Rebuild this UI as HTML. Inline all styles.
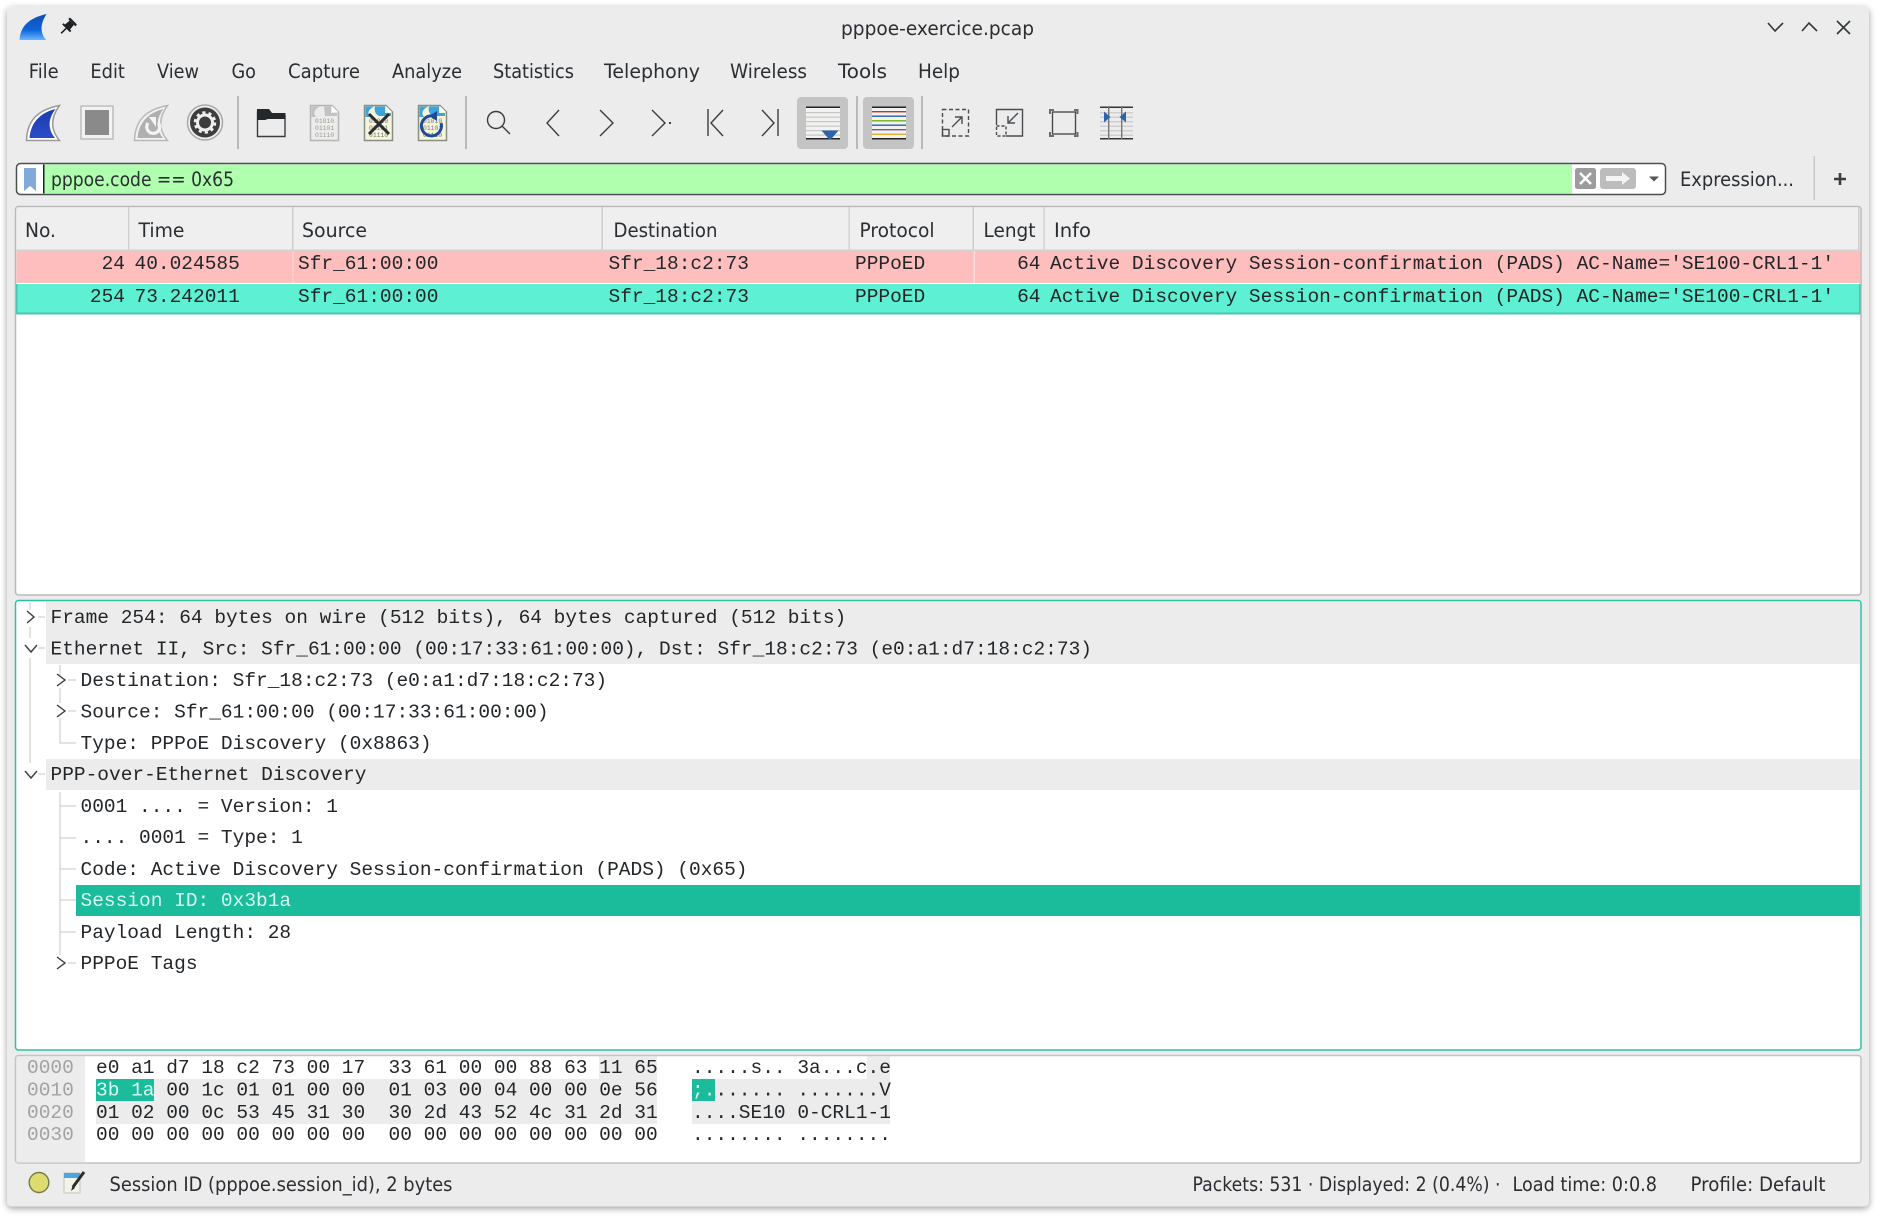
<!DOCTYPE html>
<html><head><meta charset="utf-8"><title>pppoe-exercice.pcap</title>
<style>
html,body{margin:0;padding:0;background:#fff;width:1882px;height:1219px;overflow:hidden}
svg{display:block}
text{white-space:pre}
.u{font-family:"DejaVu Sans","Liberation Sans",sans-serif;font-size:19.3px;fill:#2a2e32}
.m{font-family:"Liberation Mono",monospace;font-size:19.5px;fill:#232629}
.h{font-family:"Liberation Mono",monospace;font-size:19.5px;fill:#232629}
.o{fill:#a0a2a4}
.b{font-family:"Liberation Mono",monospace;font-size:6.4px;fill:#9c9c90}
</style></head><body>
<svg width="1882" height="1219" viewBox="0 0 1882 1219" xmlns="http://www.w3.org/2000/svg">
<defs>
<filter id="s" x="-2%" y="-2%" width="104%" height="104%"><feDropShadow dx="0" dy="2" stdDeviation="3.5" flood-color="#000" flood-opacity=".38"/></filter>
<linearGradient id="fin" x1="0" y1="0" x2="0" y2="1"><stop offset="0" stop-color="#0f4fb8"/><stop offset=".6" stop-color="#0d63d8"/><stop offset="1" stop-color="#66b6ff"/></linearGradient>
<linearGradient id="fin2" x1="0" y1="0" x2="0" y2="1"><stop offset="0" stop-color="#1c3cae"/><stop offset="1" stop-color="#2a4cc8"/></linearGradient>
</defs>
<rect x="7" y="6.500" width="1862" height="1200" rx="5" fill="#ececec" filter="url(#s)"/>

<!-- title bar -->
<path d="M19.500 40C20.500 26 29 18 46.700 14C40.500 23 39.500 32 46 40Z" fill="url(#fin)"/>
<g transform="translate(67.500 27) rotate(45)" fill="#1e2225"><rect x="-5" y="-8.500" width="10" height="2.500" rx=".6"/><path d="M-3-6H3L3.600 0H5.500V2H-5.500V0H-3.600Z"/><rect x="-.8" y="2" width="1.600" height="7"/></g>
<text class="u" x="841" y="35" textLength="193" lengthAdjust="spacingAndGlyphs">pppoe-exercice.pcap</text>
<g fill="none" stroke="#31363b" stroke-width="1.600"><path d="M1768 23L1775 31L1783 23"/><path d="M1802 31L1809 23L1817 31"/><path d="M1837 21L1850 34M1850 21L1837 34"/></g>

<!-- menu -->
<g class="mn">
<text class="u" x="28.700" y="78" textLength="30" lengthAdjust="spacingAndGlyphs">File</text>
<text class="u" x="90.400" y="78" textLength="34.500" lengthAdjust="spacingAndGlyphs">Edit</text>
<text class="u" x="157" y="78" textLength="42" lengthAdjust="spacingAndGlyphs">View</text>
<text class="u" x="231.500" y="78" textLength="24.500" lengthAdjust="spacingAndGlyphs">Go</text>
<text class="u" x="288" y="78" textLength="72" lengthAdjust="spacingAndGlyphs">Capture</text>
<text class="u" x="392" y="78" textLength="70" lengthAdjust="spacingAndGlyphs">Analyze</text>
<text class="u" x="493" y="78" textLength="81" lengthAdjust="spacingAndGlyphs">Statistics</text>
<text class="u" x="604" y="78" textLength="96" lengthAdjust="spacingAndGlyphs">Telephony</text>
<text class="u" x="730" y="78" textLength="77" lengthAdjust="spacingAndGlyphs">Wireless</text>
<text class="u" x="838" y="78" textLength="49" lengthAdjust="spacingAndGlyphs">Tools</text>
<text class="u" x="918" y="78" textLength="42" lengthAdjust="spacingAndGlyphs">Help</text>
</g>

<!-- toolbar -->
<path d="M26.500 140.500C27 122 36 110 59.500 105.500C51 117 50 129 59.500 140.500Z" fill="#fff" stroke="#9a9a9a" stroke-width="1.500"/>
<path d="M29.500 138C30.500 124 39 113 55.500 109C48 119 47.500 129 55 138Z" fill="url(#fin2)"/>
<rect x="81" y="106" width="32" height="33" fill="#f2f2f2" stroke="#bdbdbd" stroke-width="1.500"/>
<rect x="85" y="110" width="24" height="25" fill="#8a8a8a"/>
<path d="M134.500 140.500C135 122 144 110 167.500 105.500C159 117 158 129 167.500 140.500Z" fill="#f2f2f2" stroke="#b8b8b8" stroke-width="1.500"/>
<path d="M137.500 138C138.500 124 147 113 163.500 109C156 119 155.500 129 163 138Z" fill="#b0b0b0"/>
<path d="M148 123A6.500 6.500 0 1 0 158.500 123" fill="none" stroke="#f4f4f4" stroke-width="3.200"/><path d="M149 117H156V127Z" fill="#f4f4f4"/>
<circle cx="205" cy="122.500" r="17.500" fill="#efefef" stroke="#a8a8a8" stroke-width="1.500"/>
<circle cx="205" cy="122.500" r="15" fill="#3d3d3d"/>
<circle cx="205" cy="122.500" r="7.500" fill="none" stroke="#eee" stroke-width="3"/>
<circle cx="205" cy="122.500" r="10" fill="none" stroke="#eee" stroke-width="2.500" stroke-dasharray="3.200 3.100"/>
<rect x="237" y="96" width="2" height="53" fill="#b9b9b9"/>

<path d="M257.500 136.500V112h11l3 4h13.500v20.500Z" fill="#ececec" stroke="#3a3d40" stroke-width="1.400"/>
<path d="M257 120V109h12l3 4h13.500v6H268l-3 1Z" fill="#25282b"/>

<g id="doc"><path d="M310.500 105.500H332L338.500 112V140.500H310.500Z" fill="#ececec" stroke="#b5b5b5" stroke-width="1.500"/><path d="M311.500 106.500H320C314 110 313 113 316 117H311.500Z" fill="#c2c2c2"/><path d="M324 106.500H331V113H337V116H325Z" fill="#c2c2c2"/><path d="M332 106L338 112H332Z" fill="#fff"/>
<text class="b" x="315" y="123">01010</text><text class="b" x="315" y="130">01101</text><text class="b" x="315" y="137">01110</text></g>

<path d="M364.500 105.500H386L392.500 112V140.500H364.500Z" fill="#f5f4dc" stroke="#8a8d80" stroke-width="1.500"/>
<path d="M365.500 106.500H374C368 110 367 113 370 117H365.500Z" fill="#3aa4dd"/><path d="M375 106.500H385V113H391V116H379C375 114 374 110 375 106.500Z" fill="#3aa4dd"/><path d="M386 106L392 112H386Z" fill="#fff"/>
<text class="b" x="369" y="123" style="fill:#777">01010</text><text class="b" x="369" y="130" style="fill:#777">01101</text><text class="b" x="369" y="137" style="fill:#777">01110</text>
<path d="M369 114L389 134M389 114L369 134" stroke="#2b2d30" stroke-width="3"/>

<path d="M418.500 105.500H440L446.500 112V140.500H418.500Z" fill="#f5f4dc" stroke="#8a8d80" stroke-width="1.500"/>
<path d="M419.500 106.500H428C422 110 421 113 424 117H419.500Z" fill="#3aa4dd"/><path d="M429 106.500H439V113H445V116H433C429 114 428 110 429 106.500Z" fill="#3aa4dd"/><path d="M440 106L446 112H440Z" fill="#fff"/>
<text class="b" x="423" y="123" style="fill:#777">01010</text><text class="b" x="423" y="130" style="fill:#777">01101</text><text class="b" x="423" y="137" style="fill:#777">01110</text>
<path d="M433 116A10 10 0 1 0 441 123" fill="none" stroke="#1f4b99" stroke-width="3"/><path d="M437 111V121L429 116Z" fill="#1f4b99"/>
<rect x="465" y="96" width="2" height="53" fill="#b9b9b9"/>

<g fill="none" stroke="#3a3d40" stroke-width="1.400">
<circle cx="496" cy="120" r="8.500"/><path d="M502 126L510 134"/>
<path d="M559 110L547 123L559 136"/>
<path d="M600 110L613 123L600 136"/>
<path d="M652 110L665 123L652 136"/>
<path d="M708 109V136M723 110L711 123L723 136"/>
<path d="M762 110L774 123L762 136M778 109V136"/>
</g>
<rect x="669" y="122" width="2" height="2" fill="#3a3d40"/>

<rect x="797" y="97" width="51" height="52" rx="4" fill="#c4c4c4"/>
<rect x="806" y="108" width="34" height="30" fill="#f2f2f0"/>
<g fill="#c6c6c6"><rect x="806" y="112" width="34" height="1.200"/><rect x="806" y="116.500" width="34" height="1.200"/><rect x="806" y="121" width="34" height="1.200"/><rect x="806" y="125.500" width="34" height="1.200"/><rect x="806" y="130" width="34" height="1.200"/><rect x="806" y="134.500" width="34" height="1.200"/></g>
<rect x="806" y="106.500" width="34" height="1.500" fill="#222"/><rect x="806" y="138" width="34" height="1.500" fill="#222"/>
<path d="M821.500 130.500H838.500L832.500 137.500L830 140L827.500 137.500Z" fill="#2f62a8"/>
<rect x="856" y="96" width="2" height="53" fill="#b9b9b9"/>
<rect x="863" y="97" width="51" height="52" rx="4" fill="#c4c4c4"/>
<rect x="872" y="108" width="34" height="30" fill="#f2f2f0"/>
<rect x="872" y="106.500" width="34" height="1.500" fill="#222"/><rect x="872" y="111" width="34" height="1.400" fill="#c0392b"/><rect x="872" y="115.500" width="34" height="1.400" fill="#2a5fa8"/><rect x="872" y="120" width="34" height="1.600" fill="#7cbe2a"/><rect x="872" y="124.500" width="34" height="1.400" fill="#2a5fa8"/><rect x="872" y="129" width="34" height="1.400" fill="#7a5a90"/><rect x="872" y="133.500" width="34" height="1.600" fill="#e2b73a"/><rect x="872" y="138" width="34" height="1.500" fill="#222"/>
<rect x="921" y="96" width="2" height="53" fill="#b9b9b9"/>

<g fill="none" stroke="#4a4d50" stroke-width="1.400">
<rect x="942.500" y="109.500" width="26" height="26.500" stroke-dasharray="4 2.500"/><rect x="942.500" y="129.500" width="6.500" height="6.500"/>
<path d="M952 127L962 117M955 117H962V124"/>
<path d="M996.500 125V109.500H1022.500V136H1006"/><rect x="996.500" y="126" width="9.500" height="10" stroke-dasharray="3 2"/>
<path d="M1018 113L1008 123M1015 123H1008V116"/>
<rect x="1052.500" y="112" width="23" height="22"/>
</g>
<g fill="none" stroke="#6a6d70" stroke-width="2"><path d="M1050 114V110H1054M1074 110H1077.500V114M1077.500 132V136H1074M1054 136H1050V132"/></g>

<g fill="#cfcfcf"><rect x="1100" y="112" width="33" height="1.500"/><rect x="1100" y="116.500" width="33" height="1.500"/><rect x="1100" y="121" width="33" height="1.500"/><rect x="1100" y="125.500" width="33" height="1.500"/><rect x="1100" y="130" width="33" height="1.500"/><rect x="1100" y="134.500" width="33" height="1.500"/></g>
<rect x="1100" y="106.500" width="33" height="1.500" fill="#333"/><rect x="1100" y="138" width="33" height="1.500" fill="#333"/>
<rect x="1108" y="106" width="1.400" height="33" fill="#777"/><rect x="1121" y="106" width="1.400" height="33" fill="#777"/>
<path d="M1104 111.500L1110.500 117L1104 122.500Z" fill="#2f62a8"/><path d="M1126 111.500L1119.500 117L1126 122.500Z" fill="#2f62a8"/>

<!-- filter bar -->
<rect x="16.500" y="163.500" width="1649" height="31" rx="4" fill="#fff" stroke="#4d5053" stroke-width="1.500"/>
<rect x="44" y="164.500" width="1528" height="29" fill="#afffaf"/>
<rect x="43" y="164.500" width="1.500" height="29" fill="#222"/>
<path d="M24 168H36V191L30 186L24 191Z" fill="#82aad8"/>
<text class="u" x="51" y="186" textLength="183" lengthAdjust="spacingAndGlyphs">pppoe.code == 0x65</text>
<rect x="1575" y="168" width="21" height="21" rx="2.500" fill="#9c9c9c"/>
<path d="M1580 173L1591 184M1591 173L1580 184" stroke="#fff" stroke-width="2.600"/>
<rect x="1600" y="168" width="36" height="21" rx="3" fill="#bcbcbc"/>
<path d="M1606 176H1622V172L1630 178.500L1622 185V181H1606Z" fill="#f4f4f4"/>
<path d="M1649 176.500H1659L1654 181.500Z" fill="#555"/>
<text class="u" x="1680" y="186" textLength="114" lengthAdjust="spacingAndGlyphs">Expression...</text>
<rect x="1813.500" y="156" width="1.500" height="44" fill="#c8c8c8"/>
<path d="M1840 173V185M1834 179H1846" stroke="#3a3d40" stroke-width="2.600"/>

<!-- packet list -->
<rect x="15.500" y="206.500" width="1845.500" height="388.500" rx="3" fill="#fff" stroke="#b9b9b9" stroke-width="1.500"/>
<rect x="16.500" y="207.500" width="1843.500" height="43" fill="#efefef"/>
<rect x="16.500" y="249.500" width="1843.500" height="1.500" fill="#d2d2d2"/>
<g fill="#cdcdcd"><rect x="128" y="207" width="1.200" height="43"/><rect x="292" y="207" width="1.500" height="43"/><rect x="601.500" y="207" width="1.500" height="43"/><rect x="848.500" y="207" width="1.200" height="43"/><rect x="972.500" y="207" width="1.500" height="43"/><rect x="1043.500" y="207" width="1.200" height="43"/><rect x="1858" y="207" width="1.500" height="43"/></g>
<g>
<text class="u" x="25" y="237" textLength="31" lengthAdjust="spacingAndGlyphs">No.</text>
<text class="u" x="138.500" y="237" textLength="46" lengthAdjust="spacingAndGlyphs">Time</text>
<text class="u" x="302" y="237" textLength="65" lengthAdjust="spacingAndGlyphs">Source</text>
<text class="u" x="613.500" y="237" textLength="104" lengthAdjust="spacingAndGlyphs">Destination</text>
<text class="u" x="859.500" y="237" textLength="75" lengthAdjust="spacingAndGlyphs">Protocol</text>
<text class="u" x="983.500" y="237" textLength="52" lengthAdjust="spacingAndGlyphs">Lengt</text>
<text class="u" x="1054" y="237" textLength="37" lengthAdjust="spacingAndGlyphs">Info</text>
</g>
<rect x="16.500" y="251" width="1844" height="32" fill="#ffbebe"/>
<rect x="16.500" y="284" width="1844" height="30" fill="#5ef0d3"/>
<rect x="16.500" y="312.500" width="1844" height="2" fill="#4ec4ad"/>
<rect x="16" y="284" width="1.500" height="30" fill="#4ec4ad"/><rect x="1859" y="284" width="1.500" height="30" fill="#4ec4ad"/>
<g fill="#fff" opacity=".45"><rect x="292.500" y="251" width="1" height="32"/><rect x="973.500" y="251" width="1.500" height="32"/></g>
<g class="rows">
<text class="m" x="125" y="269" text-anchor="end">24</text><text class="m" x="134.500" y="269">40.024585</text><text class="m" x="298" y="269">Sfr_61:00:00</text><text class="m" x="608.500" y="269">Sfr_18:c2:73</text><text class="m" x="855" y="269">PPPoED</text><text class="m" x="1040.500" y="269" text-anchor="end">64</text><text class="m" x="1050" y="269">Active Discovery Session-confirmation (PADS) AC-Name='SE100-CRL1-1'</text>
<text class="m" x="125" y="302" text-anchor="end">254</text><text class="m" x="134.500" y="302">73.242011</text><text class="m" x="298" y="302">Sfr_61:00:00</text><text class="m" x="608.500" y="302">Sfr_18:c2:73</text><text class="m" x="855" y="302">PPPoED</text><text class="m" x="1040.500" y="302" text-anchor="end">64</text><text class="m" x="1050" y="302">Active Discovery Session-confirmation (PADS) AC-Name='SE100-CRL1-1'</text>
</g>

<!-- details -->
<rect x="15.500" y="600.500" width="1845.500" height="449.500" rx="3" fill="#fff" stroke="#2cc0a4" stroke-width="1.500"/>
<rect x="46" y="601.500" width="1814" height="62.500" fill="#ececec"/>
<rect x="46" y="759" width="1814" height="31" fill="#ececec"/>
<rect x="76" y="885" width="1784" height="31" fill="#1abc9c"/>
<g stroke="#d2d2d2" stroke-width="1.300" fill="none">
<path d="M30 603V610M30 627V638M30 658V763"/>
<path d="M38 617H45M38 648H45M38 774H45"/>
<path d="M60 665V675M60 688V703M60 718V743H76"/>
<path d="M68 680H76M68 711H76"/>
<path d="M60 792V955M60 806H76M60 838H76M60 869H76M60 900H76M60 932H76M68 963H76"/>
</g>
<g fill="none" stroke="#3a3d40" stroke-width="1.400">
<path d="M27 611L34 617L27 623"/><path d="M25 645L31 652L37 645"/><path d="M25 771L31 778L37 771"/>
<path d="M57 674L65 680L57 686"/><path d="M57 705L65 711L57 717"/><path d="M57 957L65 963L57 969"/>
</g>
<g>
<text class="m" x="50.500" y="623">Frame 254: 64 bytes on wire (512 bits), 64 bytes captured (512 bits)</text>
<text class="m" x="50.500" y="654.500">Ethernet II, Src: Sfr_61:00:00 (00:17:33:61:00:00), Dst: Sfr_18:c2:73 (e0:a1:d7:18:c2:73)</text>
<text class="m" x="80.500" y="686">Destination: Sfr_18:c2:73 (e0:a1:d7:18:c2:73)</text>
<text class="m" x="80.500" y="717.500">Source: Sfr_61:00:00 (00:17:33:61:00:00)</text>
<text class="m" x="80.500" y="749">Type: PPPoE Discovery (0x8863)</text>
<text class="m" x="50.500" y="780">PPP-over-Ethernet Discovery</text>
<text class="m" x="80.500" y="812">0001 .... = Version: 1</text>
<text class="m" x="80.500" y="843">.... 0001 = Type: 1</text>
<text class="m" x="80.500" y="875">Code: Active Discovery Session-confirmation (PADS) (0x65)</text>
<text class="m" x="80.500" y="906" style="fill:#d4f7ef">Session ID: 0x3b1a</text>
<text class="m" x="80.500" y="938">Payload Length: 28</text>
<text class="m" x="80.500" y="969">PPPoE Tags</text>
</g>

<!-- hex -->
<rect x="15.500" y="1055.500" width="1845.500" height="107.500" rx="3" fill="#fff" stroke="#c2c2c2" stroke-width="1.500"/>
<rect x="16.500" y="1056.500" width="68.500" height="106" fill="#ececec"/>
<g fill="#ececec">
<rect x="599" y="1056.500" width="58" height="22.500"/><rect x="96" y="1079" width="561" height="45"/>
<rect x="867" y="1056.500" width="23" height="22.500"/><rect x="692" y="1079" width="198" height="45"/>
</g>
<g fill="#1abc9c"><rect x="96" y="1079" width="58" height="22"/><rect x="692" y="1079" width="23" height="22"/></g>
<g>
<text class="h o" x="27" y="1073">0000</text><text class="h o" x="27" y="1095.500">0010</text><text class="h o" x="27" y="1118">0020</text><text class="h o" x="27" y="1140">0030</text>
<text class="h" x="96" y="1073">e0 a1 d7 18 c2 73 00 17  33 61 00 00 88 63 11 65</text>
<text class="h" x="96" y="1095.500"><tspan style="fill:#dff8f2">3b 1a</tspan> 00 1c 01 01 00 00  01 03 00 04 00 00 0e 56</text>
<text class="h" x="96" y="1118">01 02 00 0c 53 45 31 30  30 2d 43 52 4c 31 2d 31</text>
<text class="h" x="96" y="1140">00 00 00 00 00 00 00 00  00 00 00 00 00 00 00 00</text>
<text class="h" x="692" y="1073">.....s.. 3a...c.e</text>
<text class="h" x="692" y="1095.500"><tspan style="fill:#dff8f2">;.</tspan>...... .......V</text>
<text class="h" x="692" y="1118">....SE10 0-CRL1-1</text>
<text class="h" x="692" y="1140">........ ........</text>
</g>

<!-- status bar -->
<ellipse cx="39" cy="1182.500" rx="9.800" ry="10" fill="#dcdc70" stroke="#77774a" stroke-width="1.400"/>
<path d="M64 1173H80V1193H64Z" fill="#f3f3e8" stroke="#c4c4c4"/><rect x="64" y="1173" width="16" height="5" fill="#4aa6de"/>
<path d="M84 1172L73 1187" stroke="#2b2d30" stroke-width="3"/><path d="M72.500 1186L71 1191L75 1188Z" fill="#2b2d30"/>
<text class="u" x="109.500" y="1191" textLength="343" lengthAdjust="spacingAndGlyphs">Session ID (pppoe.session_id), 2 bytes</text>
<text class="u" x="1192.500" y="1191" textLength="308" lengthAdjust="spacingAndGlyphs">Packets: 531 · Displayed: 2 (0.4%) ·</text>
<text class="u" x="1512.500" y="1191" textLength="144.500" lengthAdjust="spacingAndGlyphs">Load time: 0:0.8</text>
<text class="u" x="1690.500" y="1191" textLength="135" lengthAdjust="spacingAndGlyphs">Profile: Default</text>
</svg>
</body></html>
